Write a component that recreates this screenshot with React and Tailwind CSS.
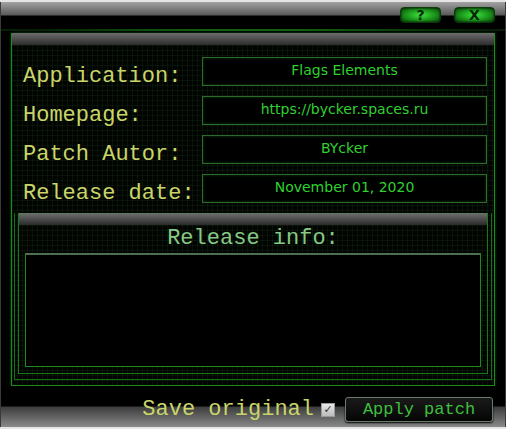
import React, { useState } from "react";

const mono = "font-['Liberation_Mono','Courier_New',monospace]";
const sans = "font-['DejaVu_Sans','Verdana',sans-serif]";

// faint green grid behind the panels
const grid =
  "bg-[#020402] bg-[linear-gradient(rgba(40,90,40,0.17)_1px,transparent_1px),linear-gradient(90deg,rgba(40,90,40,0.17)_1px,transparent_1px)] bg-[size:5px_5px]";

const fields = [
  { label: "Application:", value: "Flags Elements" },
  { label: "Homepage:", value: "https://bycker.spaces.ru" },
  { label: "Patch Autor:", value: "BYcker" },
  { label: "Release date:", value: "November 01, 2020" },
];

const TitleButton = ({ children }) => (
  <button className="w-[41px] h-[16px] rounded-[4px] border border-[#0d3a0d] bg-[radial-gradient(ellipse_at_center,#3fe03f_0%,#1c9a1c_50%,#0a420a_100%)] shadow-[inset_0_0_2px_#000] flex items-center justify-center text-[14px] leading-none font-bold text-[#062806] font-['DejaVu_Sans',sans-serif]">
    {children}
  </button>
);

const FieldRow = ({ label, value }) => (
  <div className="flex items-start h-[29px]">
    <div className={`w-[179px] pt-[9px] text-[22px] leading-[22px] text-[#c9d569] ${mono}`}>
      {label}
    </div>
    <div
      className={`w-[285px] h-[29px] border border-[#2b6b2b] bg-black shadow-[inset_0_0_3px_#0f3a0f] flex items-center justify-center pb-[2px] text-[14px] text-[#2fd02f] ${sans}`}
    >
      {value}
    </div>
  </div>
);

const App = () => {
  const [saveOriginal, setSaveOriginal] = useState(true);

  return (
    <div className="w-[506px] h-[429px] bg-black flex flex-col overflow-hidden">
      <div className="h-[2px] bg-[#e6e6e6]" />
      <div className="flex-1 flex flex-col border-x border-[#3a3a3a] relative">
        {/* title strip with help / close buttons */}
        <div className="h-[27px] bg-[linear-gradient(#a2a2a2,#5a5a5a_13px,#000_14px,#000)] flex justify-end gap-[13px] pt-[5px] pr-[10px]">
          <TitleButton>?</TitleButton>
          <TitleButton>X</TitleButton>
        </div>
        <div className="h-[2px] bg-[radial-gradient(ellipse_at_center,#3ad63a_0%,#137013_30%,#061f06_70%)]" />
        <div className="h-[2px]" />

        {/* main panel */}
        <div className="mx-[10px] h-[353px] flex flex-col border-x border-b border-[#1d8a1d] shadow-[0_0_3px_#0c4a0c]">
          <div className="h-[12px] bg-[linear-gradient(#6c6c6c,#2c2c2c)]" />
          <div className={`flex-1 flex flex-col ${grid}`}>
            <div className="flex flex-col gap-[10px] pt-[12px] pl-[11px]">
              {fields.map((f) => (
                <FieldRow key={f.label} label={f.label} value={f.value} />
              ))}
            </div>

            <div className="mt-[10px] mx-[2px] flex-1 flex flex-col border-x border-b border-[#157015] mb-[5px]">
              <div className="mx-[3px] flex-1 flex flex-col border-x border-b border-[#1a7a1a] mb-[5px]">
                <div className="h-[12px] bg-[linear-gradient(#6a6a6a,#2a2a2a)] border-t border-[#5b7a5b]" />
                <div className={`h-[28px] flex items-center justify-center text-[22px] leading-none text-[#86c986] ${mono}`}>
                  Release info:
                </div>
                <div className="mx-[6px] h-[114px] bg-black border-t-2 border-t-[#4f6f4f] border-x border-b border-[#1d8a1d]" />
                <div className="flex-1" />
              </div>
            </div>
          </div>
        </div>

        {/* footer with checkbox and apply button */}
        <div className="flex-1 bg-[linear-gradient(#000_0,#000_20px,#3c3c3c_21px,#8a8a8a)] flex items-center justify-end pr-[12px] gap-[10px] pt-[6px]">
          <label className={`flex items-center gap-[7px] text-[22px] leading-none text-[#c9d569] ${mono}`}>
            Save original
            <span
              onClick={() => setSaveOriginal(!saveOriginal)}
              className="w-[14px] h-[14px] border border-[#9a9a9a] bg-[linear-gradient(#e8e8e8,#bcbcbc)] flex items-center justify-center text-[11px] leading-none text-[#333] font-['DejaVu_Sans',sans-serif]"
            >
              {saveOriginal ? "✓" : ""}
            </span>
          </label>
          <button
            className={`w-[148px] h-[25px] rounded-[3px] border border-[#6a7a6a] bg-[linear-gradient(#1a1a1a,#050505)] shadow-[0_1px_2px_#000] text-[17px] leading-none text-[#3fbf3f] ${mono}`}
          >
            Apply patch
          </button>
        </div>
      </div>
      <div className="h-[2px] bg-[#e6e6e6]" />
    </div>
  );
};

export default App;
